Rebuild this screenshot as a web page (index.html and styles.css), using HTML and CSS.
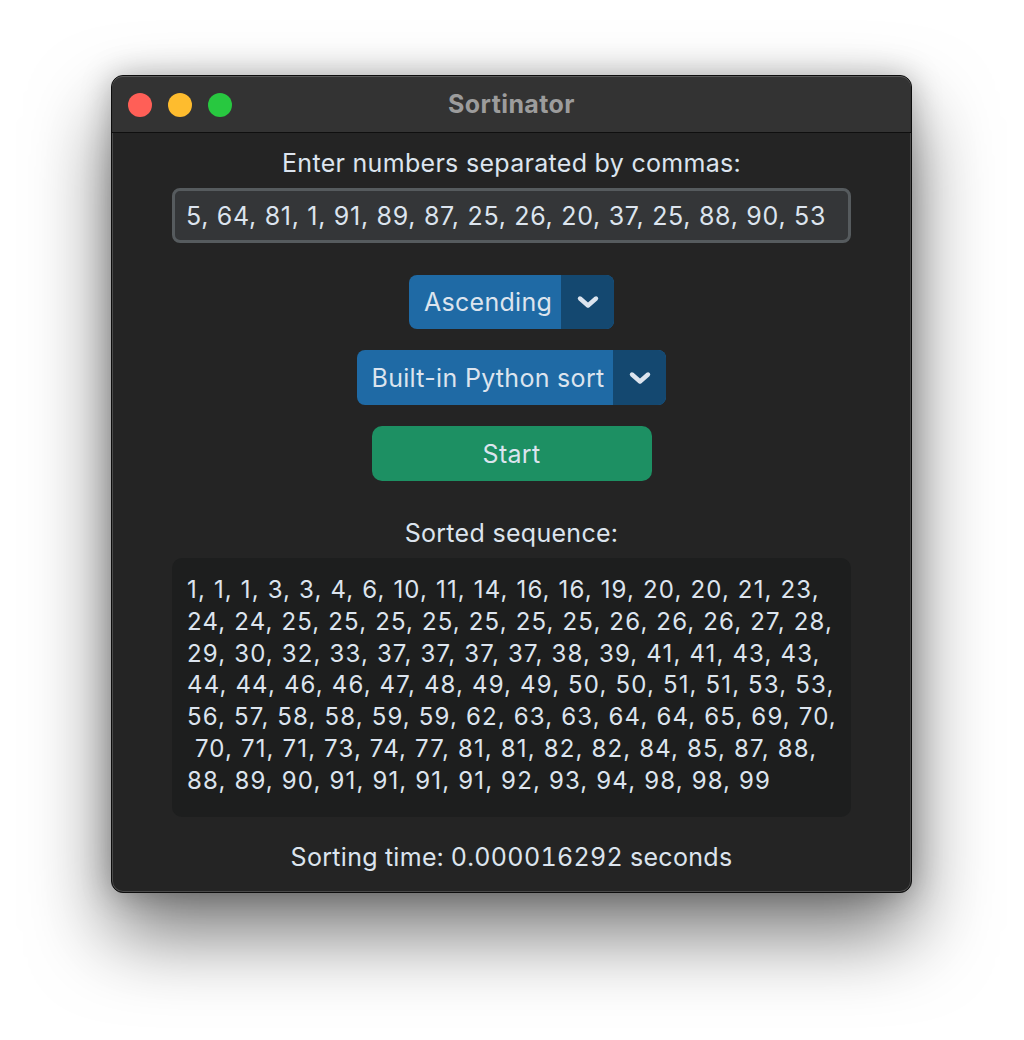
FILE: index.html
```html
<!DOCTYPE html>
<html>
<head>
<meta charset="utf-8">
<link rel="stylesheet" href="styles.css">
</head>
<body>
<div class="window">
  <div class="titlebar">
    <div class="lights">
      <span class="light red"></span>
      <span class="light yellow"></span>
      <span class="light green"></span>
    </div>
    <div class="title">Sortinator</div>
  </div>
  <div class="content">
    <div class="label">Enter numbers separated by commas:</div>
    <div class="input">5, 64, 81, 1, 91, 89, 87, 25, 26, 20, 37, 25, 88, 90, 53</div>
    <div class="dropdown dd1">
      <span class="dd-text">Ascending</span>
      <span class="dd-arrow"><svg width="24" height="14" viewBox="0 0 24 14"><path d="M4 3.5 L12 10.5 L20 3.5" fill="none" stroke="#dce4ee" stroke-width="4.4" stroke-linecap="round" stroke-linejoin="round"/></svg></span>
    </div>
    <div class="dropdown dd2">
      <span class="dd-text">Built-in Python sort</span>
      <span class="dd-arrow"><svg width="24" height="14" viewBox="0 0 24 14"><path d="M4 3.5 L12 10.5 L20 3.5" fill="none" stroke="#dce4ee" stroke-width="4.4" stroke-linecap="round" stroke-linejoin="round"/></svg></span>
    </div>
    <div class="button">Start</div>
    <div class="label label2">Sorted sequence:</div>
    <div class="textbox">1, 1, 1, 3, 3, 4, 6, 10, 11, 14, 16, 16, 19, 20, 20, 21, 23,
24, 24, 25, 25, 25, 25, 25, 25, 25, 26, 26, 26, 27, 28,
29, 30, 32, 33, 37, 37, 37, 37, 38, 39, 41, 41, 43, 43,
44, 44, 46, 46, 47, 48, 49, 49, 50, 50, 51, 51, 53, 53,
56, 57, 58, 58, 59, 59, 62, 63, 63, 64, 64, 65, 69, 70,
 70, 71, 71, 73, 74, 77, 81, 81, 82, 82, 84, 85, 87, 88,
88, 89, 90, 91, 91, 91, 91, 92, 93, 94, 98, 98, 99</div>
    <div class="label label3 num">Sorting time: 0.000016292 seconds</div>
  </div>
</div>
</body>
</html>
```

FILE: styles.css
```css
html, body {
  margin: 0;
  padding: 0;
  background: #ffffff;
}
html {
  min-height: 1040px;
}
body {
  min-height: 1040px;
  box-sizing: border-box;
  padding: 75px 0 0 111px;
  font-family: Inter, "Noto Sans", "Liberation Sans", sans-serif;
}
.window {
  width: 801px;
  box-sizing: border-box;
  border-radius: 12px;
  background: #242424;
  border: 1px solid #0d0d0d;
  box-shadow: inset 0 0 0 1px #4a4a4a, 0 40px 80px rgba(0,0,0,0.55), 0 0 30px rgba(0,0,0,0.25);
  overflow: hidden;
}
.titlebar {
  height: 56px;
  background: #333333;
  border-bottom: 1px solid #0f0f0f;
  display: flex;
  align-items: center;
  position: relative;
  border-radius: 11px 11px 0 0;
  box-shadow: inset 0 1px 0 #5a5a5a;
}
.lights {
  display: flex;
  gap: 16px;
  padding-left: 16px;
  padding-top: 1px;
}
.light {
  width: 24px;
  height: 24px;
  border-radius: 50%;
  display: block;
}
.red { background: #ff5f57; }
.yellow { background: #febc2e; }
.green { background: #28c840; }
.title {
  position: absolute;
  left: 0;
  right: 0;
  text-align: center;
  color: #9c9c9c;
  font-weight: 700;
  font-size: 25px;
  letter-spacing: 0.4px;
}
.content {
  display: flex;
  flex-direction: column;
  align-items: center;
  padding: 15px 0 20px;
  color: #dce4ee;
  font-size: 25px;
  letter-spacing: 0.3px;
}
.num {
  font-feature-settings: "tnum" 1;
}
.label {
  height: 30px;
  line-height: 30px;
}
.input {
  margin-top: 10px;
  width: 679px;
  height: 55px;
  box-sizing: border-box;
  border: 3px solid #565b5e;
  border-radius: 8px;
  background: #343638;
  padding: 0 11px;
  display: flex;
  align-items: center;
  white-space: nowrap;
  overflow: hidden;
  letter-spacing: 0.7px;
}
.dropdown {
  display: flex;
  height: 54px;
  border-radius: 8px;
  overflow: hidden;
  background: #1f6aa5;
}
.dd1 { margin-top: 32px; }
.dd2 { margin-top: 21px; height: 55px; }
.dd-text {
  display: flex;
  align-items: center;
  padding: 0 9px 0 15px;
}
.dd-arrow {
  width: 53px;
  background: #144870;
  display: flex;
  align-items: center;
  justify-content: center;
}
.button {
  margin-top: 21px;
  width: 280px;
  height: 55px;
  border-radius: 10px;
  background: #1d9063;
  display: flex;
  align-items: center;
  justify-content: center;
}
.label2 { margin-top: 37px; }
.textbox {
  margin-top: 10px;
  width: 679px;
  height: 259px;
  box-sizing: border-box;
  background: #1d1e1e;
  border-radius: 10px;
  padding: 16px 15px;
  white-space: pre;
  font-size: 24px;
  letter-spacing: 1.15px;
  line-height: 31.8px;
  overflow: hidden;
}
.label3 { margin-top: 25px; }
```
